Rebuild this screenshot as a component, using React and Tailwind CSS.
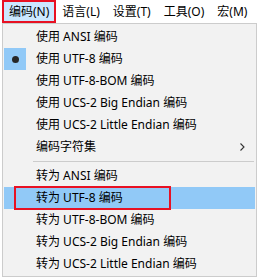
import React from 'react';

const font = { fontFamily: '"Noto Sans", "Noto Sans CJK SC", sans-serif' };

const menus = ['编码(N)', '语言(L)', '设置(T)', '工具(O)', '宏(M)'];

const groupA = [
  { label: '使用 ANSI 编码' },
  { label: '使用 UTF-8 编码', checked: true },
  { label: '使用 UTF-8-BOM 编码' },
  { label: '使用 UCS-2 Big Endian 编码' },
  { label: '使用 UCS-2 Little Endian 编码' },
  { label: '编码字符集', sub: true },
];

const groupB = [
  { label: '转为 ANSI 编码' },
  { label: '转为 UTF-8 编码', active: true },
  { label: '转为 UTF-8-BOM 编码' },
  { label: '转为 UCS-2 Big Endian 编码' },
  { label: '转为 UCS-2 Little Endian 编码' },
];

function Item({ label, checked, sub, active }) {
  return (
    <div className={'relative flex h-[22px] items-center ' + (active ? 'bg-[#91c9f7]' : '')}>
      <div className={'flex h-[22px] w-[22px] items-center justify-center ' + (checked ? 'bg-[#91c9f7]' : '')}>
        {checked && <span className="h-[7px] w-[7px] rounded-full bg-[#262626]" />}
      </div>
      <span className="pl-[10px] text-[12px] text-black">{label}</span>
      {sub && (
        <svg className="absolute right-[10px] top-[7px]" width="5" height="8" viewBox="0 0 5 8">
          <path d="M0.5 0.5 L4 4 L0.5 7.5" fill="none" stroke="#333" strokeWidth="1.1" />
        </svg>
      )}
      {active && (
        <div className="absolute left-[10px] top-[-1px] h-[24px] w-[157px] border-2 border-[#e81123]" />
      )}
    </div>
  );
}

export default function App() {
  return (
    <div className="h-[279px] w-[257px] overflow-hidden bg-white" style={font}>
      <div className="flex h-[23px] items-center gap-[3px] pl-[4px]">
        {menus.map((m, i) => (
          <div
            key={m}
            className={'relative flex h-[21px] items-center px-[5px] text-[12px] text-black ' + (i === 0 ? 'bg-[#cce8ff]' : '')}
          >
            {m}
            {i === 0 && (
              <div className="absolute left-[-2px] right-[-2px] top-[-1px] bottom-[-1px] border-2 border-[#e81123]" />
            )}
          </div>
        ))}
      </div>
      <div className="ml-[2px] border border-[#cccccc] bg-[#f2f2f2] px-[1px] pb-[1px] pt-[2px]">
        {groupA.map((it) => (
          <Item key={it.label} {...it} />
        ))}
        <div className="flex h-[7px] items-center pl-[29px] pr-[1px]">
          <div className="h-px w-full bg-[#cccccc]" />
        </div>
        {groupB.map((it) => (
          <Item key={it.label} {...it} />
        ))}
      </div>
    </div>
  );
}
